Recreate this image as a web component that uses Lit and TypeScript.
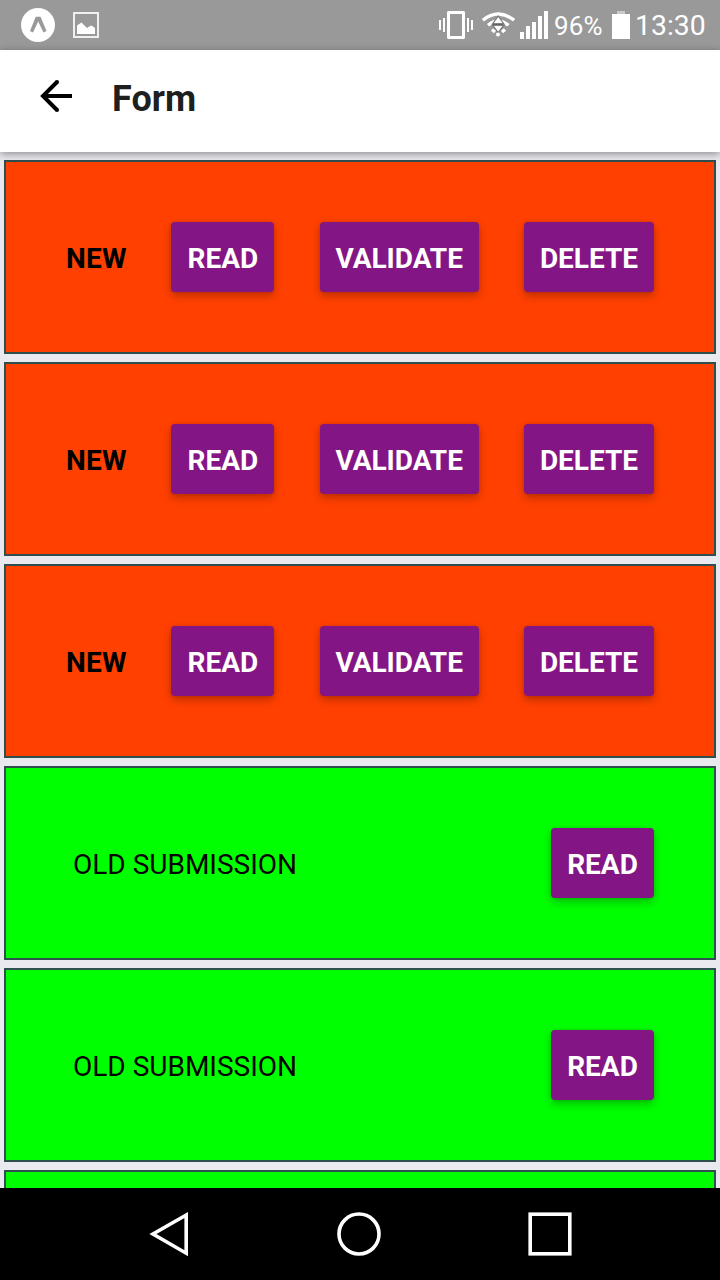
import { LitElement, html, css } from "lit";
import { customElement, property } from "lit/decorators.js";

@customElement("status-bar")
class StatusBar extends LitElement {
  static styles = css`
    :host {
      display: flex;
      align-items: center;
      height: 50px;
      background: #999;
      color: #fff;
      flex: none;
    }
    svg { display: block; flex: none; }
    .spacer { flex: 1; }
    .battery-text { font-size: 26px; line-height: 50px; width: 58px; padding-top: 2px; letter-spacing: 0.2px; }
    .time { font-size: 28.4px; line-height: 50px; width: 85px; padding-top: 2px; white-space: nowrap; }
  `;
  render() {
    return html`
      <svg width="110" height="50" viewBox="0 0 110 50">
        <circle cx="38" cy="25" r="17" fill="#fff" />
        <path d="M35.700 16.800h4.800L46.500 31l-3 1.500L38.200 21.500 33 32.500 30 31z" fill="#999" />
        <rect x="74" y="13" width="24" height="24" fill="none" stroke="#f0f0f0" stroke-width="2" />
        <path d="M77 34v-8.500l4.500-3L87 28l3.500-2.200h1.500L95 28v6z" fill="#fff" />
      </svg>
      <div class="spacer"></div>
      <svg width="118" height="50" viewBox="436 0 118 50">
        <path fill-rule="evenodd" d="M448 11h16l1 1v26l-1 1h-16l-1-1V12zM450 14v22h12v-22z" fill="#fff" />
        <path d="M440 20v10M444 18v14M468 18v14M472 20v10" stroke="#fff" stroke-width="2" />
        <path d="M482.800 20.200Q498 7.800 514.200 20.200M488 25.300Q498 16.500 508.500 25.300M492 29.500l3 2.500M505 29.500l-3 2.500" fill="none" stroke="#fff" stroke-width="3.400" />
        <path d="M498.200 16l6 8.500-6 8-6-8z" fill="#fff" stroke="#777" stroke-width="1.200" />
        <path d="M493 24.500h10.500" stroke="#666" stroke-width="2.600" />
        <circle cx="498" cy="34.500" r="2" fill="#fff" />
        <path d="M520 32h4v7h-4zM526 26h4v13h-4zM532 22h4v17h-4zM538 16h4v23h-4zM544 11h4v28h-4z" fill="#fff" />
      </svg>
      <div class="battery-text">96%</div>
      <svg width="23" height="50" viewBox="612 0 23 50">
        <path d="M617 11h8v3h-8z" fill="#c9c9c9" />
        <path d="M612 14h18v25h-18z" fill="#fff" />
      </svg>
      <div class="time">13:30</div>
    `;
  }
}

@customElement("form-card")
class FormCard extends LitElement {
  @property() label = "";
  @property({ type: Boolean, reflect: true }) fresh = false;
  @property({ type: Array }) actions: string[] = [];
  static styles = css`
    :host {
      display: flex;
      align-items: center;
      justify-content: space-between;
      box-sizing: border-box;
      height: 194px;
      flex: none;
      padding: 0 60px 0 67px;
      border: 2px solid #2f4f4f;
      background: #00ff00;
      color: #000;
      font-size: 28px;
      white-space: nowrap;
    }
    :host([fresh]) { background: #ff4000; padding-left: 60px; font-weight: 700; }
    .label { padding-top: 2px; }
    :host([fresh]) .label { letter-spacing: 0.25px; width: 60px; }
    button {
      height: 70px;
      padding: 2px 0 0;
      border: 0;
      border-radius: 4px;
      background: #841584;
      color: #fff;
      font: 700 28px Roboto, sans-serif;
      box-shadow: 0 4px 8px rgba(0, 0, 0, 0.25), 0 0 3px rgba(0, 0, 0, 0.14);
    }
    .read { width: 103px; }
    .validate { width: 159px; }
    .delete { width: 130px; }
  `;
  render() {
    return html`${this.label ? html`<span class="label">${this.label}</span>` : ""}${this.actions.map((a) => html`<button class=${a.toLowerCase()}>${a}</button>`)}`;
  }
}

@customElement("app-root")
class AppRoot extends LitElement {
  static styles = css`
    :host {
      display: flex;
      flex-direction: column;
      width: 720px;
      height: 1280px;
      overflow: hidden;
      background: #e9e9ef;
      font-family: Roboto, sans-serif;
    }
    header {
      display: flex;
      align-items: center;
      gap: 36px;
      height: 102px;
      flex: none;
      padding-left: 36px;
      box-sizing: border-box;
      background: #fff;
      position: relative;
      box-shadow: 0 2px 8px rgba(0, 0, 0, 0.4);
    }
    header svg { margin-top: -10px; }
    h1 { margin: -4px 0 0; font-size: 36px; line-height: 42px; font-weight: 700; color: rgba(0, 0, 0, 0.9); }
    main {
      flex: 1;
      min-height: 0;
      overflow: hidden;
      display: flex;
      flex-direction: column;
      gap: 8px;
      padding: 8px 4px 0;
    }
    nav { height: 92px; flex: none; background: #000; }
    nav svg { display: block; }
  `;
  render() {
    const fresh = ["READ", "VALIDATE", "DELETE"];
    return html`
      <status-bar></status-bar>
      <header>
        <svg width="40" height="40" viewBox="36 76 40 40">
          <path d="M72 96H43M57 82L43 96l14 14" fill="none" stroke="#000" stroke-width="4" />
          <path d="M57 82h.01M57 110h.01" stroke="#000" stroke-width="4" stroke-linecap="round" />
        </svg>
        <h1>Form</h1>
      </header>
      <main>
        ${[0, 1, 2].map(() => html`<form-card fresh label="NEW" .actions=${fresh}></form-card>`)}
        ${[0, 1].map(() => html`<form-card label="OLD SUBMISSION" .actions=${["READ"]}></form-card>`)}
        <form-card></form-card>
      </main>
      <nav>
        <svg width="720" height="92" viewBox="0 1188 720 92" fill="none" stroke="#fff" stroke-width="3.600">
          <path d="M186.200 1215v38.200L153 1234z" />
          <circle cx="359" cy="1234" r="20" />
          <rect x="530.200" y="1214.200" width="39.600" height="39.600" />
        </svg>
      </nav>
    `;
  }
}
